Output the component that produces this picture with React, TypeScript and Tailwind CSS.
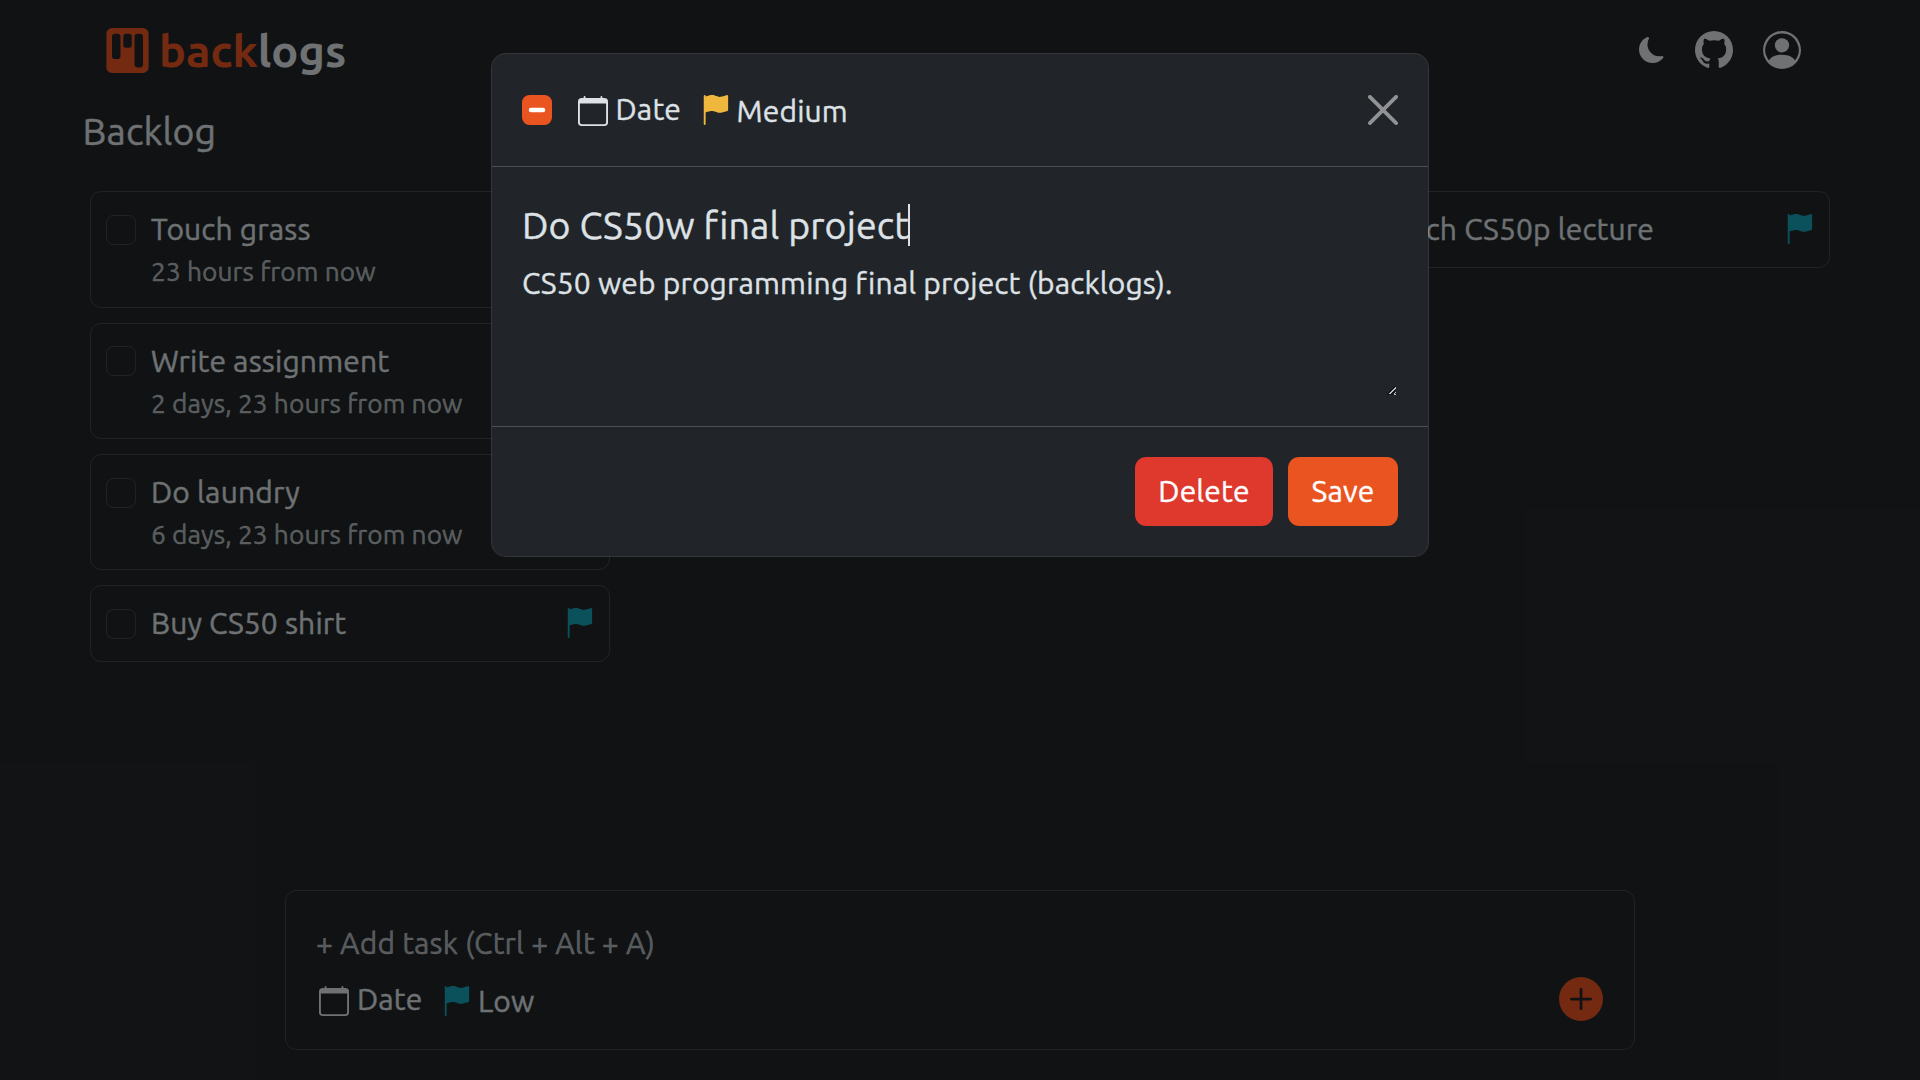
import React from "react";
import {
  BsCalendar,
  BsFlagFill,
  BsGithub,
  BsKanbanFill,
  BsMoonFill,
  BsPersonCircle,
  BsPlusCircleFill,
} from "react-icons/bs";

type Task = { title: string; due?: string; flag?: boolean };

const backlog: Task[] = [
  { title: "Touch grass", due: "23 hours from now" },
  { title: "Write assignment", due: "2 days, 23 hours from now" },
  { title: "Do laundry", due: "6 days, 23 hours from now" },
  { title: "Buy CS50 shirt", flag: true },
];

const done: Task[] = [{ title: "Watch CS50p lecture", flag: true }];

function TaskCard({ task }: { task: Task }) {
  return (
    <li className="flex rounded-[11.25px] border border-white/15 px-[15px] py-[15px]">
      <span className="mt-[7.5px] size-[30px] shrink-0 rounded-[7.5px] border border-white/15" />
      <div className="ml-[15px] grow">
        <p className="text-[30px] leading-[45px]">{task.title}</p>
        {task.due && (
          <p className="text-[26.25px] leading-[39.375px] tracking-[0.1px] text-[#dee2e6]/75">{task.due}</p>
        )}
      </div>
      {task.flag && <BsFlagFill className="mt-[7px] size-[30px] shrink-0 text-[#17a2b8]" />}
    </li>
  );
}

function Column({ tasks }: { tasks: Task[] }) {
  return (
    <ul className="flex w-[520px] flex-col gap-[15px]">
      {tasks.map((t) => (
        <TaskCard key={t.title} task={t} />
      ))}
    </ul>
  );
}

function Options({ priority, color }: { priority: string; color: string }) {
  return (
    <div className="flex h-[45px] items-start text-[30px] leading-[45px]">
      <BsCalendar className="mt-[9.4px] size-[30px]" />
      <span className="ml-[7.5px] mt-[0.4px]">Date</span>
      <BsFlagFill className={`ml-[19px] mt-[9px] size-[30px] ${color}`} />
      <span className="ml-[6.5px] mt-[2.4px]">{priority}</span>
    </div>
  );
}

function TaskDialog() {
  return (
    <div className="flex w-[938px] flex-col rounded-[15px] border border-white/15 bg-[#212529] bg-clip-padding">
      <div className="flex h-[113px] items-center border-b border-[#495057] px-[30px]">
        <span className="flex size-[30px] items-center justify-center rounded-[7.5px] bg-[#e95420]">
          <svg viewBox="0 0 20 20" className="size-[30px]">
            <path d="M6 10h8" fill="none" stroke="#fff" strokeWidth="3" strokeLinecap="round" />
          </svg>
        </span>
        <div className="mb-[2.2px] ml-[26px]">
          <Options priority="Medium" color="text-[#efb73e]" />
        </div>
        <svg viewBox="0 0 16 16" className="ml-auto size-[30px] fill-white opacity-50">
          <path d="M.293.293a1 1 0 0 1 1.414 0L8 6.586 14.293.293a1 1 0 1 1 1.414 1.414L9.414 8l6.293 6.293a1 1 0 0 1-1.414 1.414L8 9.414l-6.293 6.293a1 1 0 0 1-1.414-1.414L6.586 8 .293 1.707a1 1 0 0 1 0-1.414z" />
        </svg>
      </div>
      <div className="px-[30px] py-[30px]">
        <div className="flex items-center">
          <span className="text-[37.5px] leading-[56px]">Do CS50w final project</span>
          <span className="-ml-px h-[42px] w-[2px] bg-[#dee2e6]" />
        </div>
        <div className="mt-[8px] flex h-[135px] items-start justify-between">
          <p className="text-[30px] leading-[45px]">
            CS50 web programming final project (backlogs).
          </p>
          <svg viewBox="0 0 9 9" className="mr-[2px] mb-px size-[9px] self-end" shapeRendering="crispEdges">
            <path d="M0 7h1v-1h1v-1h1v-1h1v-1h1v-1h1v-1h1v-1h2v2h-1v7h-8z" fill="#151719" />
            <path d="M2 8h2v-1h1v-1h1v-1h1v-1h1v-1h1v-2h-1v1h-1v1h-1v1h-1v1h-1v1h-1v1h-1zM7 7h1v-1h1v1h-1v1h1v1h-2z" fill="#c0c1c2" />
          </svg>
        </div>
      </div>
      <div className="flex justify-end gap-[15px] border-t border-[#495057] p-[30px] text-[30px] leading-[45px] text-white">
        <button className="h-[69px] w-[138px] rounded-[11.25px] bg-[#df382c]">Delete</button>
        <button className="h-[69px] w-[110px] rounded-[11.25px] bg-[#e95420]">Save</button>
      </div>
    </div>
  );
}

export default function App() {
  return (
    <div className="relative flex h-[1080px] w-[1920px] flex-col overflow-hidden bg-[#212529] font-['Ubuntu','Noto_Sans',sans-serif] tracking-[0.15px] text-[#dee2e6] [-webkit-text-stroke-width:0.4px]">
      <header className="flex h-[100px] items-center pl-[105px] pr-[119px]">
        <BsKanbanFill className="size-[45px] text-[#e95420]" />
        <h1 className="ml-[9px] mt-[2px] text-[45px] font-bold leading-[68px] tracking-normal [-webkit-text-stroke-width:0]">
          <span className="text-[#e95420]">back</span>logs
        </h1>
        <BsMoonFill className="ml-auto size-[26px]" />
        <BsGithub className="ml-[30px] size-[38px]" />
        <BsPersonCircle className="ml-[30px] size-[38px]" />
      </header>
      <main className="grow">
        <h2 className="mt-[9px] pl-[82.5px] text-[37.5px] leading-[45px]">Backlog</h2>
        <div className="mt-[37.3px] flex justify-between px-[90px]">
          <Column tasks={backlog} />
          <Column tasks={done} />
        </div>
      </main>
      <form className="mx-auto mb-[30px] flex h-[160px] w-[1350px] flex-col rounded-[11.25px] border border-white/15 px-[30px] pt-[30px]">
        <p className="text-[30px] leading-[45px] text-[#dee2e6]/75">+ Add task (Ctrl + Alt + A)</p>
        <div className="mt-[10.6px] flex items-center justify-between pl-[3.4px] pr-px">
          <Options priority="Low" color="text-[#17a2b8]" />
          <BsPlusCircleFill className="size-[44px] text-[#e95420]" />
        </div>
      </form>
      <div className="absolute inset-0 flex items-start justify-center bg-black/50 pt-[53px]">
        <TaskDialog />
      </div>
    </div>
  );
}
